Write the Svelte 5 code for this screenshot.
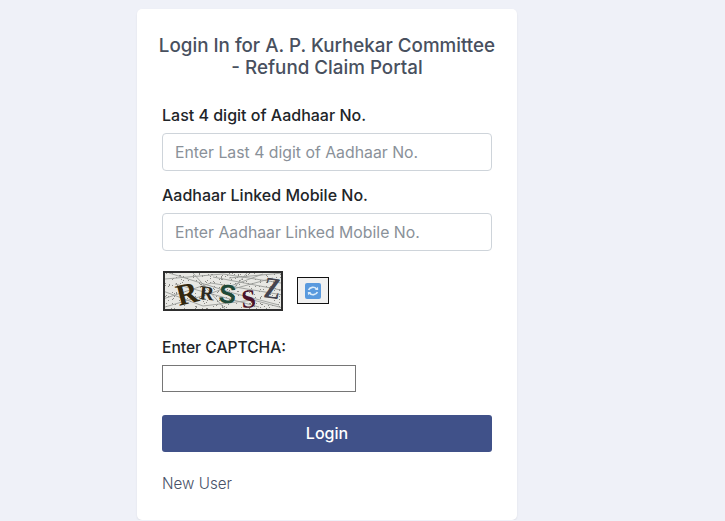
<script>
  const noise = [
    "M2 8 L60 3 L118 12", "M0 28 L48 12 L120 24", "M6 2 L70 22 L116 34", "M0 20 L40 35 L90 29 L120 37",
    "M30 2 L62 38", "M84 2 L70 18 L110 7", "M2 36 L46 23 L100 3", "M50 6 L118 19", "M12 13 L96 36", "M66 7 L120 2"
  ];
  // speckle on the captcha, fixed so every run draws the same picture
  const dots = Array.from({ length: 340 }, (_, i) => ({
    x: Math.floor((Math.sin(i * 12.9898) * 43758.5453 % 1 + 1) % 1 * 120),
    y: Math.floor((Math.sin(i * 78.233) * 24634.6345 % 1 + 1) % 1 * 40)
  }));
</script>

<div class="card">
  <h1>Login In for A. P. Kurhekar Committee<br />- Refund Claim Portal</h1>

  <div class="field">
    <label for="aadhaar">Last 4 digit of Aadhaar No.</label>
    <input id="aadhaar" type="text" placeholder="Enter Last 4 digit of Aadhaar No." />
  </div>
  <div class="field second">
    <label for="mobile">Aadhaar Linked Mobile No.</label>
    <input id="mobile" type="text" placeholder="Enter Aadhaar Linked Mobile No." />
  </div>

  <div class="captcha-row">
    <svg class="captcha" viewBox="0 0 120 40" width="120" height="40">
      <rect width="120" height="40" fill="#e8e8e4" />
      {#each dots as d}
        <rect x={d.x} y={d.y} width="1" height="1" fill="#8a8a86" />
      {/each}
      {#each noise as n}
        <path d={n} fill="none" stroke="#9a9c98" stroke-width="0.9" />
      {/each}
      <text class="glyph" transform="translate(16 35) rotate(-14)" font-size="30" fill="#33280f">R</text>
      <text class="glyph" transform="translate(36 28) rotate(6)" font-size="20" fill="#2c2a20">R</text>
      <text class="glyph sans" transform="translate(55 31) rotate(6)" font-size="26" fill="#1f4a38">S</text>
      <text class="glyph" transform="translate(79 37) rotate(-4)" font-size="26" fill="#4a1228">S</text>
      <text class="glyph" transform="translate(100 26) rotate(8) scale(0.8 1)" font-size="30" fill="#44444f">Z</text>
    </svg>
    <button class="refresh" type="button" aria-label="Refresh captcha">
      <svg viewBox="0 0 16 16" width="16" height="16">
        <rect width="16" height="16" rx="2" fill="#5a9ade" />
        <path d="M3.6 7 A4.5 4 0 0 1 11.6 6" fill="none" stroke="#dcecfa" stroke-width="1.7" />
        <path d="M9.8 7 L13.2 7 L13 3.8 Z" fill="#dcecfa" />
        <path d="M12.4 9 A4.5 4 0 0 1 4.4 10" fill="none" stroke="#dcecfa" stroke-width="1.7" />
        <path d="M6.2 9 L2.8 9 L3 12.2 Z" fill="#dcecfa" />
      </svg>
    </button>
  </div>

  <label class="captcha-label" for="code">Enter CAPTCHA:</label>
  <input class="code" id="code" type="text" />

  <button class="login" type="button">Login</button>
  <a class="new-user" href="#new">New User</a>
</div>

<style>
  :global(body) {
    margin: 0;
    background: #eff1f8;
    font-family: Inter, "Noto Sans", sans-serif;
  }
  .card {
    box-sizing: border-box;
    width: 380px;
    height: 511px;
    margin: 9px 0 0 137px;
    background: #fff;
    border-radius: 5px;
    box-shadow: 0 1px 2px rgba(0, 0, 0, 0.08);
    padding: 26px 25px 0;
    display: flex;
    flex-direction: column;
    align-items: flex-start;
  }
  h1 {
    align-self: stretch;
    margin: 0 -10px 25px;
    font-size: 18.8px;
    line-height: 22px;
    font-weight: 500;
    text-align: center;
    color: #48505e;
    white-space: nowrap;
  }
  label {
    display: block;
    font-size: 16px;
    line-height: 22px;
    font-weight: 450;
    color: #212529;
  }
  .field {
    align-self: stretch;
  }
  .field label {
    margin-bottom: 7px;
  }
  .field.second {
    margin-top: 13px;
  }
  .field input {
    box-sizing: border-box;
    display: block;
    width: 330px;
    height: 38px;
    padding: 0 12px;
    border: 1px solid #ced4da;
    border-radius: 4px;
    font: 400 15.8px Inter, "Noto Sans", sans-serif;
    color: #212529;
  }
  .field input::placeholder {
    color: #8a9199;
    opacity: 1;
  }
  .captcha-row {
    display: flex;
    align-items: center;
    gap: 14px;
    margin: 20px 0 0 1px;
  }
  .captcha {
    display: block;
    overflow: visible;
    outline: 2px solid #2e2e2e;
    outline-offset: -2px;
  }
  .glyph {
    font-family: "Liberation Serif", serif;
    font-weight: 700;
  }
  .glyph.sans {
    font-family: "Liberation Sans", sans-serif;
  }
  .refresh {
    box-sizing: border-box;
    width: 32px;
    height: 27px;
    padding: 0;
    display: flex;
    align-items: center;
    justify-content: center;
    border: 1px solid #111;
    background: #f0f0f0;
    margin-top: -1px;
  }
  .captcha-label {
    margin: 26px 0 6px 0;
    font-size: 15.6px;
  }
  .code {
    box-sizing: border-box;
    display: block;
    width: 194px;
    height: 27px;
    padding: 0 2px;
    border: 1px solid #767676;
    border-radius: 0;
    background: #fff;
  }
  .login {
    width: 330px;
    height: 37px;
    margin-top: 23px;
    padding: 0 0 2px;
    border: none;
    border-radius: 3px;
    background: #405189;
    color: #fff;
    font: 500 16px Inter, "Noto Sans", sans-serif;
  }
  .new-user {
    margin: 21px 0 0 0;
    font-size: 15.2px;
    line-height: 22px;
    font-weight: 300;
    color: #495267;
    text-decoration: none;
  }
</style>
